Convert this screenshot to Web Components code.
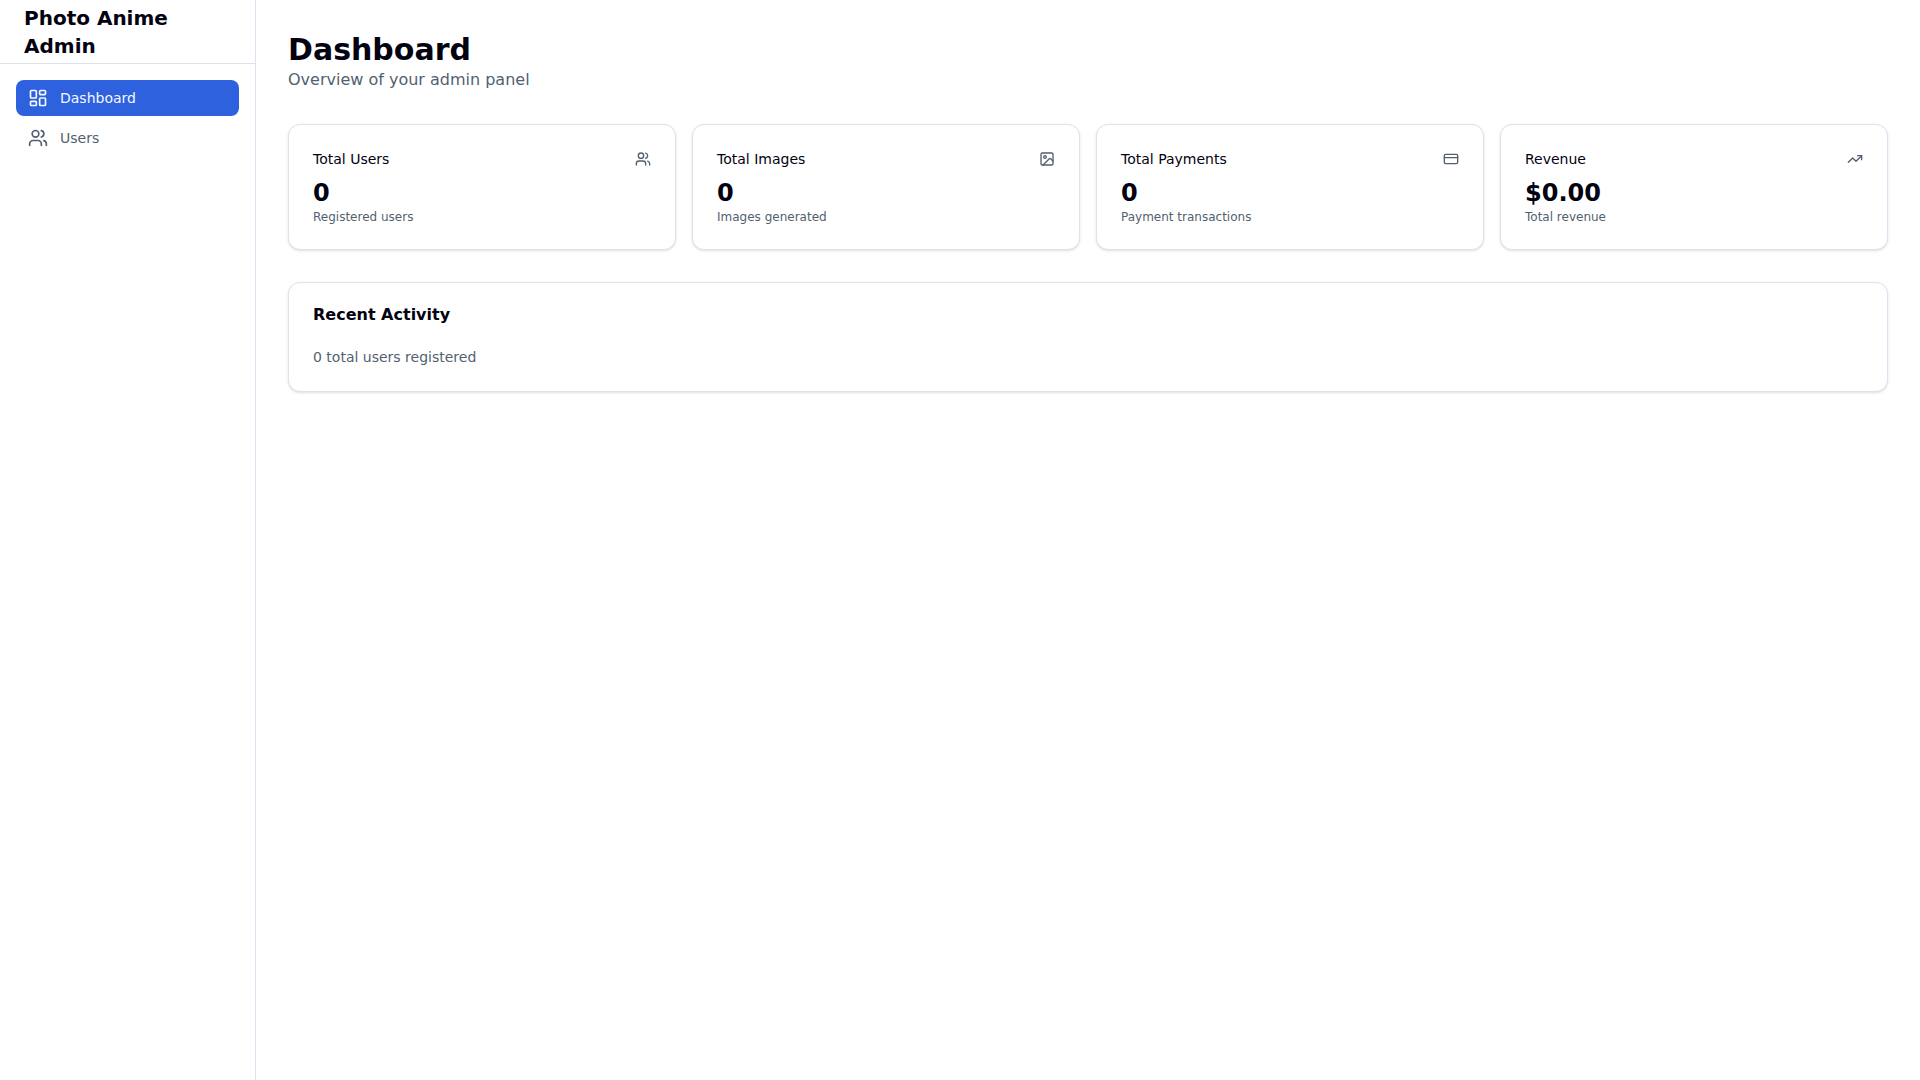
<!DOCTYPE html>
<html lang="en">
<head>
<meta charset="utf-8">
<title>Photo Anime Admin</title>
<style>
  :root {
    --foreground: #020210;
    --muted: #525f70;
    --border: #dce2ee;
    --primary: #2e61de;
    --on-primary: #f4f8ff;
  }
  body {
    margin: 0;
    background: #fff;
    color: var(--foreground);
    font-family: "DejaVu Sans", sans-serif;
    font-size: 16px;
    line-height: 24px;
  }
</style>
</head>
<body>
<admin-shell>
  <admin-sidebar slot="sidebar" heading="Photo Anime Admin">
    <nav-item icon="dashboard" href="#dashboard" active>Dashboard</nav-item>
    <nav-item icon="users" href="#users">Users</nav-item>
  </admin-sidebar>
  <page-header heading="Dashboard">Overview of your admin panel</page-header>
  <stat-grid>
    <stat-card label="Total Users" value="0" icon="users">Registered users</stat-card>
    <stat-card label="Total Images" value="0" icon="image">Images generated</stat-card>
    <stat-card label="Total Payments" value="0" icon="card">Payment transactions</stat-card>
    <stat-card label="Revenue" value="$0.00" icon="trend">Total revenue</stat-card>
  </stat-grid>
  <activity-card heading="Recent Activity">0 total users registered</activity-card>
</admin-shell>

<script>
const ICONS = {
  dashboard: '<rect width="7" height="9" x="3" y="3" rx="1"/><rect width="7" height="5" x="14" y="3" rx="1"/><rect width="7" height="9" x="14" y="12" rx="1"/><rect width="7" height="5" x="3" y="16" rx="1"/>',
  users: '<path d="M16 21v-2a4 4 0 0 0-4-4H6a4 4 0 0 0-4 4v2"/><circle cx="9" cy="7" r="4"/><path d="M22 21v-2a4 4 0 0 0-3-3.87"/><path d="M16 3.13a4 4 0 0 1 0 7.75"/>',
  image: '<rect width="18" height="18" x="3" y="3" rx="2" ry="2"/><circle cx="9" cy="9" r="2"/><path d="m21 15-3.086-3.086a2 2 0 0 0-2.828 0L6 21"/>',
  card: '<rect width="20" height="14" x="2" y="5" rx="2"/><line x1="2" x2="22" y1="10" y2="10"/>',
  trend: '<polyline points="22 7 13.5 15.5 8.5 10.5 2 17"/><polyline points="16 7 22 7 22 13"/>'
};

const CARD = `
  border: 1px solid var(--border);
  border-radius: 12px;
  background: #fff;
  box-shadow: 0 1px 3px 0 rgb(0 0 0 / .1), 0 1px 2px -1px rgb(0 0 0 / .1);
  padding: 24px;
  box-sizing: border-box;`;

class BaseElement extends HTMLElement {
  connectedCallback() {
    if (!this.shadowRoot) this.attachShadow({ mode: 'open' }).innerHTML = this.render();
  }
  attr(name) { return this.getAttribute(name) || ''; }
}

customElements.define('ui-icon', class extends BaseElement {
  render() {
    return `<style>
      :host { display: block; flex: none; width: 16px; height: 16px; }
      svg { display: block; width: 100%; height: 100%; }
    </style>
    <svg viewBox="0 0 24 24" fill="none" stroke="currentColor" stroke-width="2" stroke-linecap="round" stroke-linejoin="round" aria-hidden="true">${ICONS[this.attr('name')]}</svg>`;
  }
});

customElements.define('admin-shell', class extends BaseElement {
  render() {
    return `<style>
      :host { display: flex; min-height: 100vh; }
      main { flex: 1; min-width: 0; padding: 32px; display: flex; flex-direction: column; gap: 32px; }
    </style>
    <slot name="sidebar"></slot><main><slot></slot></main>`;
  }
});

customElements.define('admin-sidebar', class extends BaseElement {
  render() {
    return `<style>
      :host { display: flex; flex-direction: column; flex: none; width: 256px; box-sizing: border-box; border-right: 1px solid var(--border); }
      header { display: flex; align-items: center; height: 64px; box-sizing: border-box; padding: 0 24px; border-bottom: 1px solid var(--border); }
      h2 { margin: 0; font-size: 20px; line-height: 28px; font-weight: 700; }
      nav { display: flex; flex-direction: column; gap: 4px; padding: 16px; }
    </style>
    <header><h2>${this.attr('heading')}</h2></header><nav><slot></slot></nav>`;
  }
});

customElements.define('nav-item', class extends BaseElement {
  render() {
    return `<style>
      :host { display: block; }
      a { display: flex; align-items: center; gap: 12px; padding: 8px 12px; border-radius: 8px; color: var(--muted); font-size: 14px; line-height: 20px; text-decoration: none; }
      :host([active]) a { background: var(--primary); color: var(--on-primary); }
      ui-icon { width: 20px; height: 20px; }
    </style>
    <a href="${this.attr('href')}"><ui-icon name="${this.attr('icon')}"></ui-icon><span><slot></slot></span></a>`;
  }
});

customElements.define('page-header', class extends BaseElement {
  render() {
    return `<style>
      :host { display: block; }
      h1 { margin: 0; font-size: 30px; line-height: 36px; font-weight: 700; }
      p { margin: 0; color: var(--muted); }
    </style>
    <h1>${this.attr('heading')}</h1><p><slot></slot></p>`;
  }
});

customElements.define('stat-grid', class extends BaseElement {
  render() {
    return `<style>
      :host { display: grid; grid-template-columns: repeat(4, minmax(0, 1fr)); gap: 16px; }
      @media (max-width: 1023px) { :host { grid-template-columns: repeat(2, minmax(0, 1fr)); } }
    </style><slot></slot>`;
  }
});

customElements.define('stat-card', class extends BaseElement {
  render() {
    return `<style>
      :host { display: block; ${CARD} }
      header { display: flex; align-items: center; justify-content: space-between; padding-bottom: 8px; }
      h3 { margin: 0; font-size: 14px; line-height: 20px; font-weight: 500; }
      ui-icon { color: var(--muted); }
      .value { font-size: 24px; line-height: 32px; font-weight: 700; }
      p { margin: 0; font-size: 12px; line-height: 16px; color: var(--muted); }
    </style>
    <header><h3>${this.attr('label')}</h3><ui-icon name="${this.attr('icon')}"></ui-icon></header>
    <div class="value">${this.attr('value')}</div><p><slot></slot></p>`;
  }
});

customElements.define('activity-card', class extends BaseElement {
  render() {
    return `<style>
      :host { display: flex; flex-direction: column; gap: 24px; ${CARD} }
      h3 { margin: 0; font-size: 16px; line-height: 16px; font-weight: 600; }
      p { margin: 0; font-size: 14px; line-height: 20px; color: var(--muted); }
    </style>
    <h3>${this.attr('heading')}</h3><p><slot></slot></p>`;
  }
});
</script>
</body>
</html>
